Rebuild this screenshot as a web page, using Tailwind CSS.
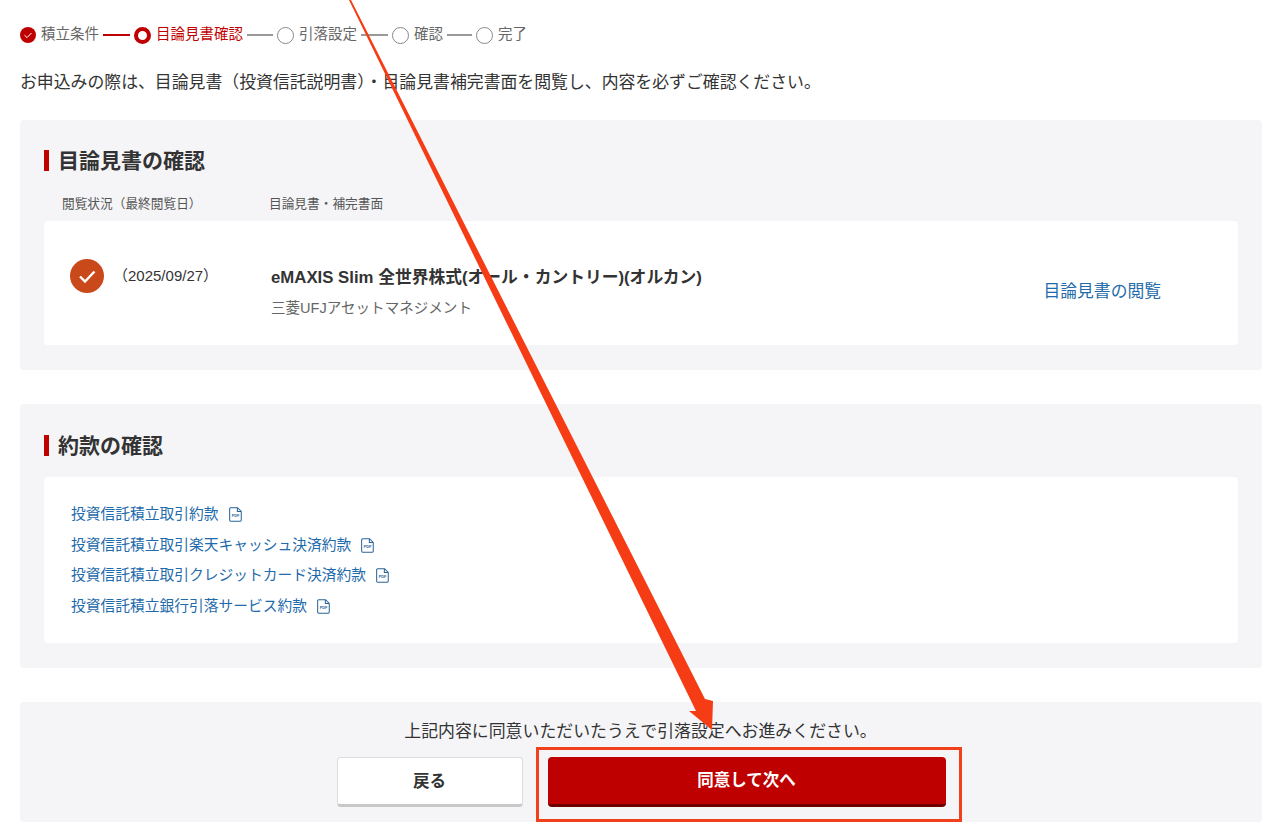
<!DOCTYPE html>
<html lang="ja">
<head>
  <meta charset="UTF-8" />
  <title>目論見書確認</title>
  <script src="https://cdn.jsdelivr.net/npm/@tailwindcss/browser@4"></script>
</head>
<body class="bg-white text-[#333] font-['Liberation_Sans','Noto_Sans_CJK_JP',sans-serif] h-[839px] overflow-hidden relative">
  <main class="pl-5 pr-[18px] pt-[25px]">
    <!-- ステッパー -->
    <ol class="flex items-center h-5 text-[14.5px] text-[#666]">
      <li class="flex items-center">
        <span class="w-4 h-4 rounded-full bg-[#bf0000] flex items-center justify-center">
          <svg viewBox="0 0 16 16" class="w-4 h-4"><path d="M4.5 8.2l2.5 2.400 4.500-4.600" fill="none" stroke="#fff" stroke-width="1"/></svg>
        </span>
        <span class="ml-[5px]">積立条件</span>
      </li>
      <li class="w-[27px] h-[2px] bg-[#bf0000] mx-1"></li>
      <li class="flex items-center">
        <span class="w-[17px] h-[17px] rounded-full border-[4px] border-[#bf0000] bg-white"></span>
        <span class="ml-[5px] text-[#bf0000]">目論見書確認</span>
      </li>
      <li class="w-[26px] h-[2px] bg-[#999] mx-1"></li>
      <li class="flex items-center">
        <span class="w-[17px] h-[17px] rounded-full border border-[#888] bg-white"></span>
        <span class="ml-[5px]">引落設定</span>
      </li>
      <li class="w-[27px] h-[2px] bg-[#999] mx-1"></li>
      <li class="flex items-center">
        <span class="w-[17px] h-[17px] rounded-full border border-[#888] bg-white"></span>
        <span class="ml-[5px]">確認</span>
      </li>
      <li class="w-[25px] h-[2px] bg-[#999] mx-1"></li>
      <li class="flex items-center">
        <span class="w-[17px] h-[17px] rounded-full border border-[#888] bg-white"></span>
        <span class="ml-[5px]">完了</span>
      </li>
    </ol>

    <p class="mt-6 h-6 font-['Noto_Sans_CJK_JP'] text-[16.88px] leading-6">お申込みの際は、目論見書（投資信託説明書）・目論見書補完書面を閲覧し、内容を必ずご確認ください。</p>

    <!-- 目論見書の確認 -->
    <section class="mt-[27px] h-[250px] bg-[#f5f5f8] rounded-sm px-6 pt-[30px]">
      <h2 class="border-l-[5px] border-[#bf0000] pl-[9px] text-[21px] leading-[21px] font-bold">目論見書の確認</h2>
      <div class="flex mt-[22px] pl-[18px] font-['Noto_Sans_CJK_JP'] text-[12.7px] leading-5 text-[#555]">
        <span class="w-[207px]">閲覧状況（最終閲覧日）</span>
        <span>目論見書・補完書面</span>
      </div>
      <div class="mt-2 h-[124px] bg-white rounded-sm flex items-start">
        <div class="w-[227px] pl-[26px] pt-[38px] flex items-center">
          <span class="w-[34px] h-[34px] rounded-full bg-[#c9491a] flex items-center justify-center">
            <svg viewBox="0 0 34 34" class="w-[34px] h-[34px]"><path d="M10 17.500l5 5 9.500-10" fill="none" stroke="#fff" stroke-width="2.400"/></svg>
          </span>
          <span class="ml-[9px] text-[15px]">（2025/09/27）</span>
        </div>
        <div class="pt-[43px] flex-1">
          <p class="h-6 text-[16.77px] leading-6 font-bold">eMAXIS Slim 全世界株式(オール<span class="font-['Noto_Sans_CJK_JP']">・</span>カントリー)(オルカン)</p>
          <p class="mt-2 text-[14.56px] leading-6 text-[#666]">三菱UFJアセットマネジメント</p>
        </div>
        <a class="mt-[59px] mr-[77px] text-[16.8px] leading-6 text-[#1f6bab]">目論見書の閲覧</a>
      </div>
    </section>

    <!-- 約款の確認 -->
    <section class="mt-[34px] h-[264px] bg-[#f5f5f8] rounded-sm px-6 pt-[31px]">
      <h2 class="border-l-[5px] border-[#bf0000] pl-[9px] text-[21px] leading-[21px] font-bold">約款の確認</h2>
      <ul class="mt-[21px] h-[166px] bg-white rounded-sm pl-[27px] pt-[22px] text-[14.75px] leading-[30.7px] text-[#1f6bab]">
        <li class="flex items-center">投資信託積立取引約款
          <svg viewBox="0 0 14 16" class="w-[13px] h-[15px] ml-[10px]"><path d="M1.700 0.700h7.500l4 4v9.600a1 1 0 0 1-1 1h-10.500a1 1 0 0 1-1-1v-12.600a1 1 0 0 1 1-1z M9 0.700v4h4" fill="none" stroke="#2a6496" stroke-width="1.100"/><text x="7" y="11" font-size="4.200" font-weight="700" text-anchor="middle" fill="#2a6496">PDF</text></svg>
        </li>
        <li class="flex items-center">投資信託積立取引楽天キャッシュ決済約款
          <svg viewBox="0 0 14 16" class="w-[13px] h-[15px] ml-[10px]"><path d="M1.700 0.700h7.500l4 4v9.600a1 1 0 0 1-1 1h-10.500a1 1 0 0 1-1-1v-12.600a1 1 0 0 1 1-1z M9 0.700v4h4" fill="none" stroke="#2a6496" stroke-width="1.100"/><text x="7" y="11" font-size="4.200" font-weight="700" text-anchor="middle" fill="#2a6496">PDF</text></svg>
        </li>
        <li class="flex items-center">投資信託積立取引クレジットカード決済約款
          <svg viewBox="0 0 14 16" class="w-[13px] h-[15px] ml-[10px]"><path d="M1.700 0.700h7.500l4 4v9.600a1 1 0 0 1-1 1h-10.500a1 1 0 0 1-1-1v-12.600a1 1 0 0 1 1-1z M9 0.700v4h4" fill="none" stroke="#2a6496" stroke-width="1.100"/><text x="7" y="11" font-size="4.200" font-weight="700" text-anchor="middle" fill="#2a6496">PDF</text></svg>
        </li>
        <li class="flex items-center">投資信託積立銀行引落サービス約款
          <svg viewBox="0 0 14 16" class="w-[13px] h-[15px] ml-[10px]"><path d="M1.700 0.700h7.500l4 4v9.600a1 1 0 0 1-1 1h-10.500a1 1 0 0 1-1-1v-12.600a1 1 0 0 1 1-1z M9 0.700v4h4" fill="none" stroke="#2a6496" stroke-width="1.100"/><text x="7" y="11" font-size="4.200" font-weight="700" text-anchor="middle" fill="#2a6496">PDF</text></svg>
        </li>
      </ul>
    </section>

    <!-- 同意エリア -->
    <section class="mt-[34px] h-[120px] bg-[#f5f5f8] rounded-sm pt-[18px]">
      <p class="text-center text-[16.9px] leading-6 pr-[1px]">上記内容に同意いただいたうえで引落設定へお進みください。</p>
      <div class="mt-[13px] flex justify-center gap-[25px]">
        <button class="w-[186px] h-[50px] bg-white rounded border border-[#ddd] border-b-[3px] border-b-[#c8c8c8] font-bold text-[16.5px]">戻る</button>
        <button class="w-[398px] h-[50px] bg-[#bf0000] rounded border-b-[3px] border-b-[#6e0000] text-white font-bold text-[16.5px]">同意して次へ</button>
      </div>
    </section>
  </main>

  <!-- 注釈（赤枠と矢印） -->
  <div class="absolute left-[536px] top-[747px] w-[426px] h-[75px] border-[3px] border-[#f0401c] pointer-events-none"></div>
  <svg class="absolute left-0 top-0 w-[1280px] h-[839px] pointer-events-none" viewBox="0 0 1280 839">
    <polygon points="349,0 351,0 705,699 713,701 712,730 689,711 696,711" fill="#f63c14"/>
  </svg>
</body>
</html>
